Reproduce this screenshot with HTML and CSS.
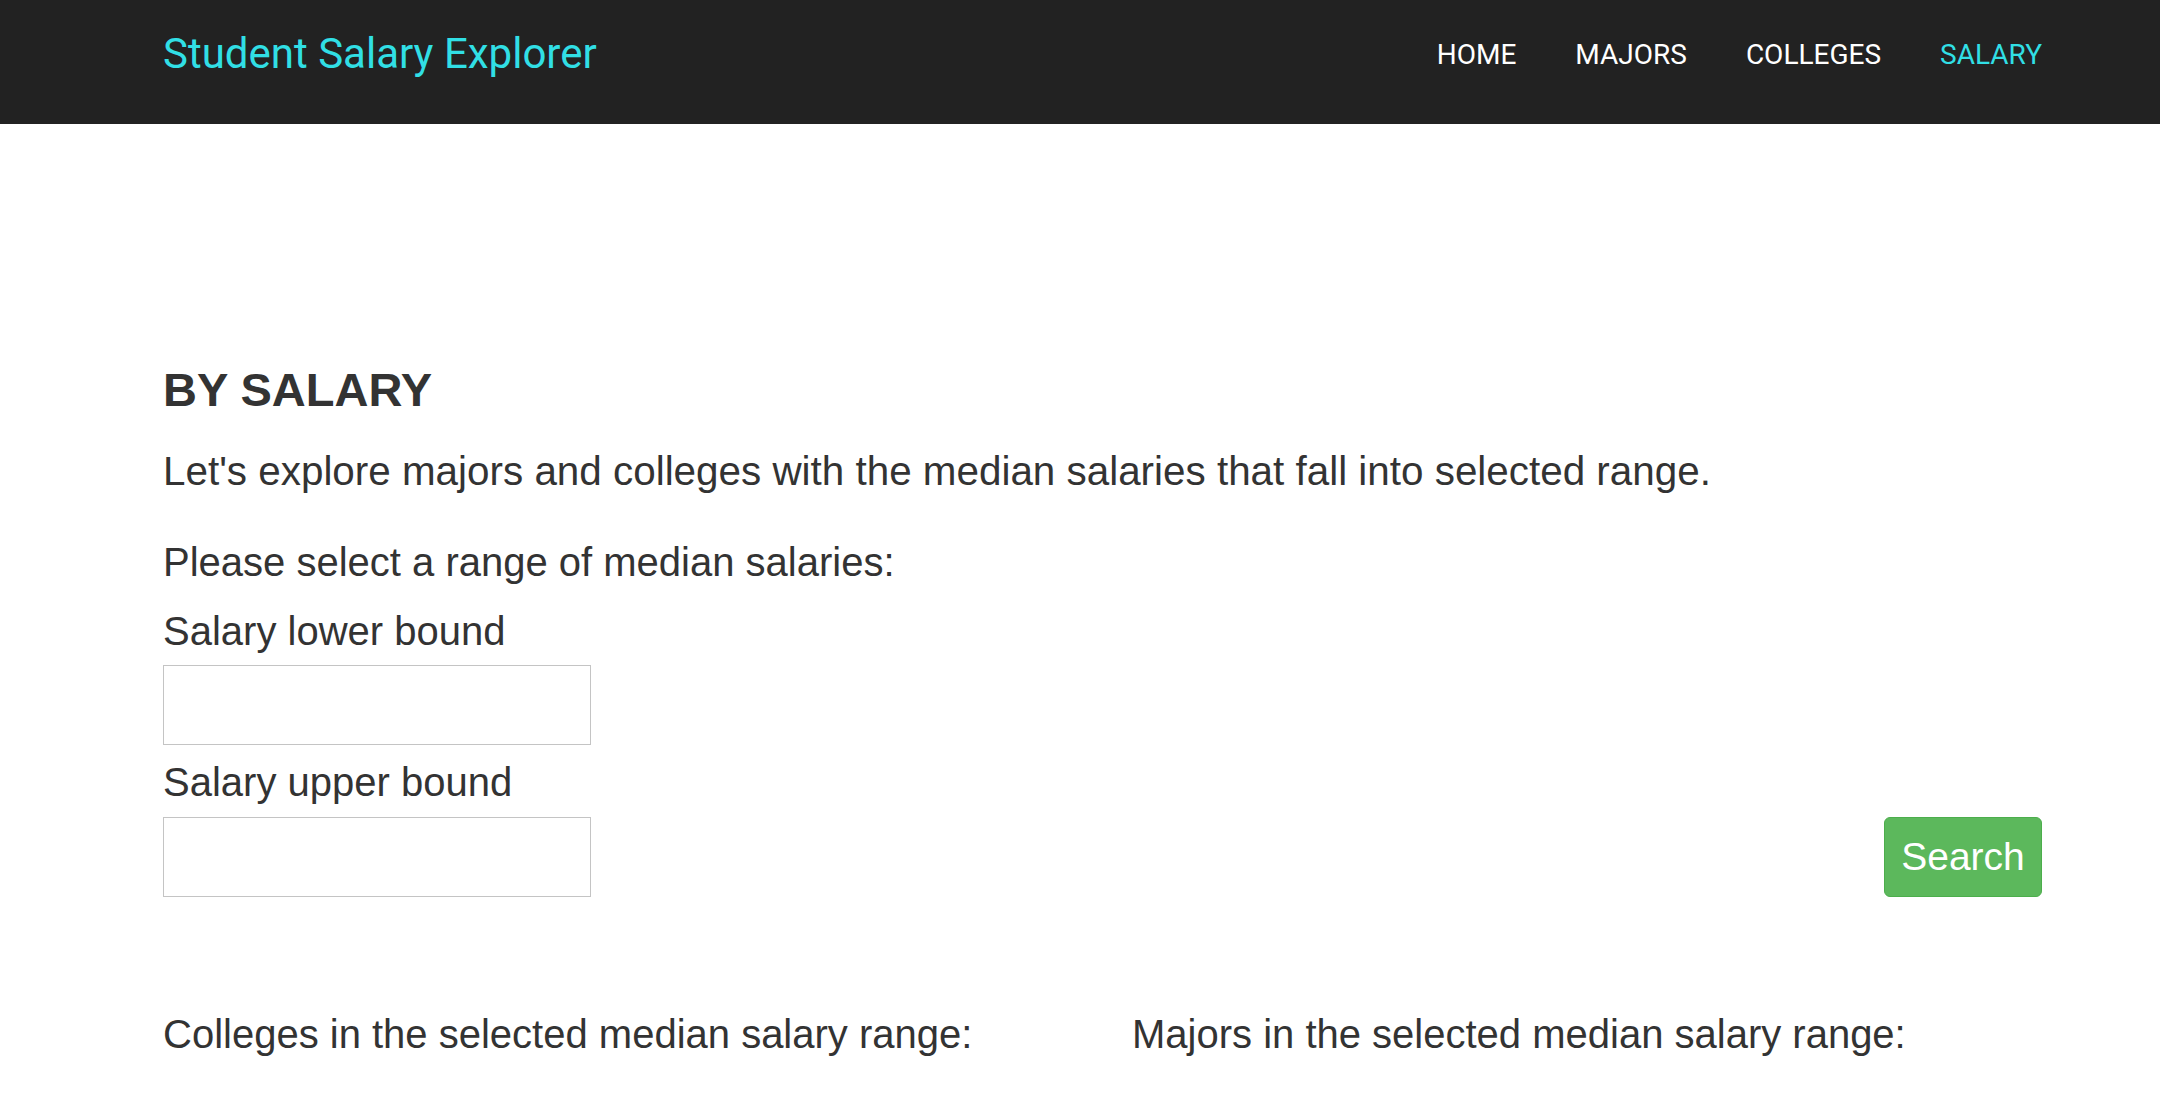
FILE: index.html
```html
<!DOCTYPE html>
<html lang="en">
<head>
<meta charset="utf-8">
<title>Student Salary Explorer</title>
<link rel="stylesheet" href="styles.css">
</head>
<body>
<header class="navbar">
  <a class="brand" href="#">Student Salary Explorer</a>
  <nav class="nav">
    <a href="#">HOME</a>
    <a href="#">MAJORS</a>
    <a href="#">COLLEGES</a>
    <a href="#" class="active">SALARY</a>
  </nav>
</header>
<main class="content">
  <h3 class="title">BY SALARY</h3>
  <p class="lead">Let's explore majors and colleges with the median salaries that fall into selected range.</p>
  <p class="prompt">Please select a range of median salaries:</p>
  <div class="form-row">
    <div class="fields">
      <label class="label label-first">Salary lower bound</label>
      <input class="field" type="text">
      <label class="label">Salary upper bound</label>
      <input class="field" type="text">
    </div>
    <button class="btn-search" type="button">Search</button>
  </div>
  <div class="results">
    <p class="result-title">Colleges in the selected median salary range:</p>
    <p class="result-title">Majors in the selected median salary range:</p>
  </div>
</main>
</body>
</html>
```

FILE: styles.css
```css
html, body {
  margin: 0;
  padding: 0;
  background: #fff;
  overflow: hidden;
}
body {
  font-family: "Liberation Sans", Arial, Helvetica, sans-serif;
  color: #333;
}
.navbar {
  height: 124px;
  background: #222;
  display: flex;
  align-items: flex-start;
  justify-content: space-between;
  padding: 0 118px 0 163px;
  box-sizing: border-box;
}
.brand {
  font-family: Roboto, "Noto Sans", sans-serif;
  font-size: 42px;
  line-height: 42px;
  color: #31dfe5;
  text-decoration: none;
  margin-top: 33px;
}
.nav {
  display: flex;
  gap: 59px;
  margin-top: 41px;
}
.nav a {
  font-family: Roboto, "Noto Sans", sans-serif;
  font-size: 28px;
  line-height: 28px;
  font-weight: 400;
  color: #fff;
  text-decoration: none;
}
.nav a.active {
  color: #31dfe5;
}
.content {
  padding: 238px 118px 0 163px;
}
.title {
  margin: 0;
  font-size: 47px;
  line-height: 56px;
  font-weight: bold;
}
.lead, .prompt, .label, .result-title {
  font-size: 40px;
  line-height: 50px;
  margin: 0;
}
.lead {
  font-size: 40.4px;
  margin-top: 28px;
}
.prompt {
  margin-top: 41px;
}
.form-row {
  display: flex;
  justify-content: space-between;
  align-items: flex-end;
}
.fields {
  display: flex;
  flex-direction: column;
  align-items: flex-start;
}
.label {
  display: block;
  margin-top: 12px;
  margin-bottom: 10px;
}
.label-first {
  margin-top: 19px;
  margin-bottom: 9px;
}
.field {
  width: 428px;
  height: 80px;
  box-sizing: border-box;
  border: 1px solid #c4c4c4;
  border-radius: 0;
  margin: 0;
  padding: 0 12px;
  font-size: 40px;
  background: #fff;
}
.btn-search {
  width: 158px;
  height: 80px;
  box-sizing: border-box;
  background: #5cb85c;
  border: 1px solid #4cae4c;
  border-radius: 6px;
  color: #fff;
  font-family: "Liberation Sans", Arial, Helvetica, sans-serif;
  font-size: 39px;
  padding: 0;
  margin: 0;
}
.results {
  display: grid;
  grid-template-columns: 1fr 1fr;
  column-gap: 59px;
  margin-top: 112px;
}
```
